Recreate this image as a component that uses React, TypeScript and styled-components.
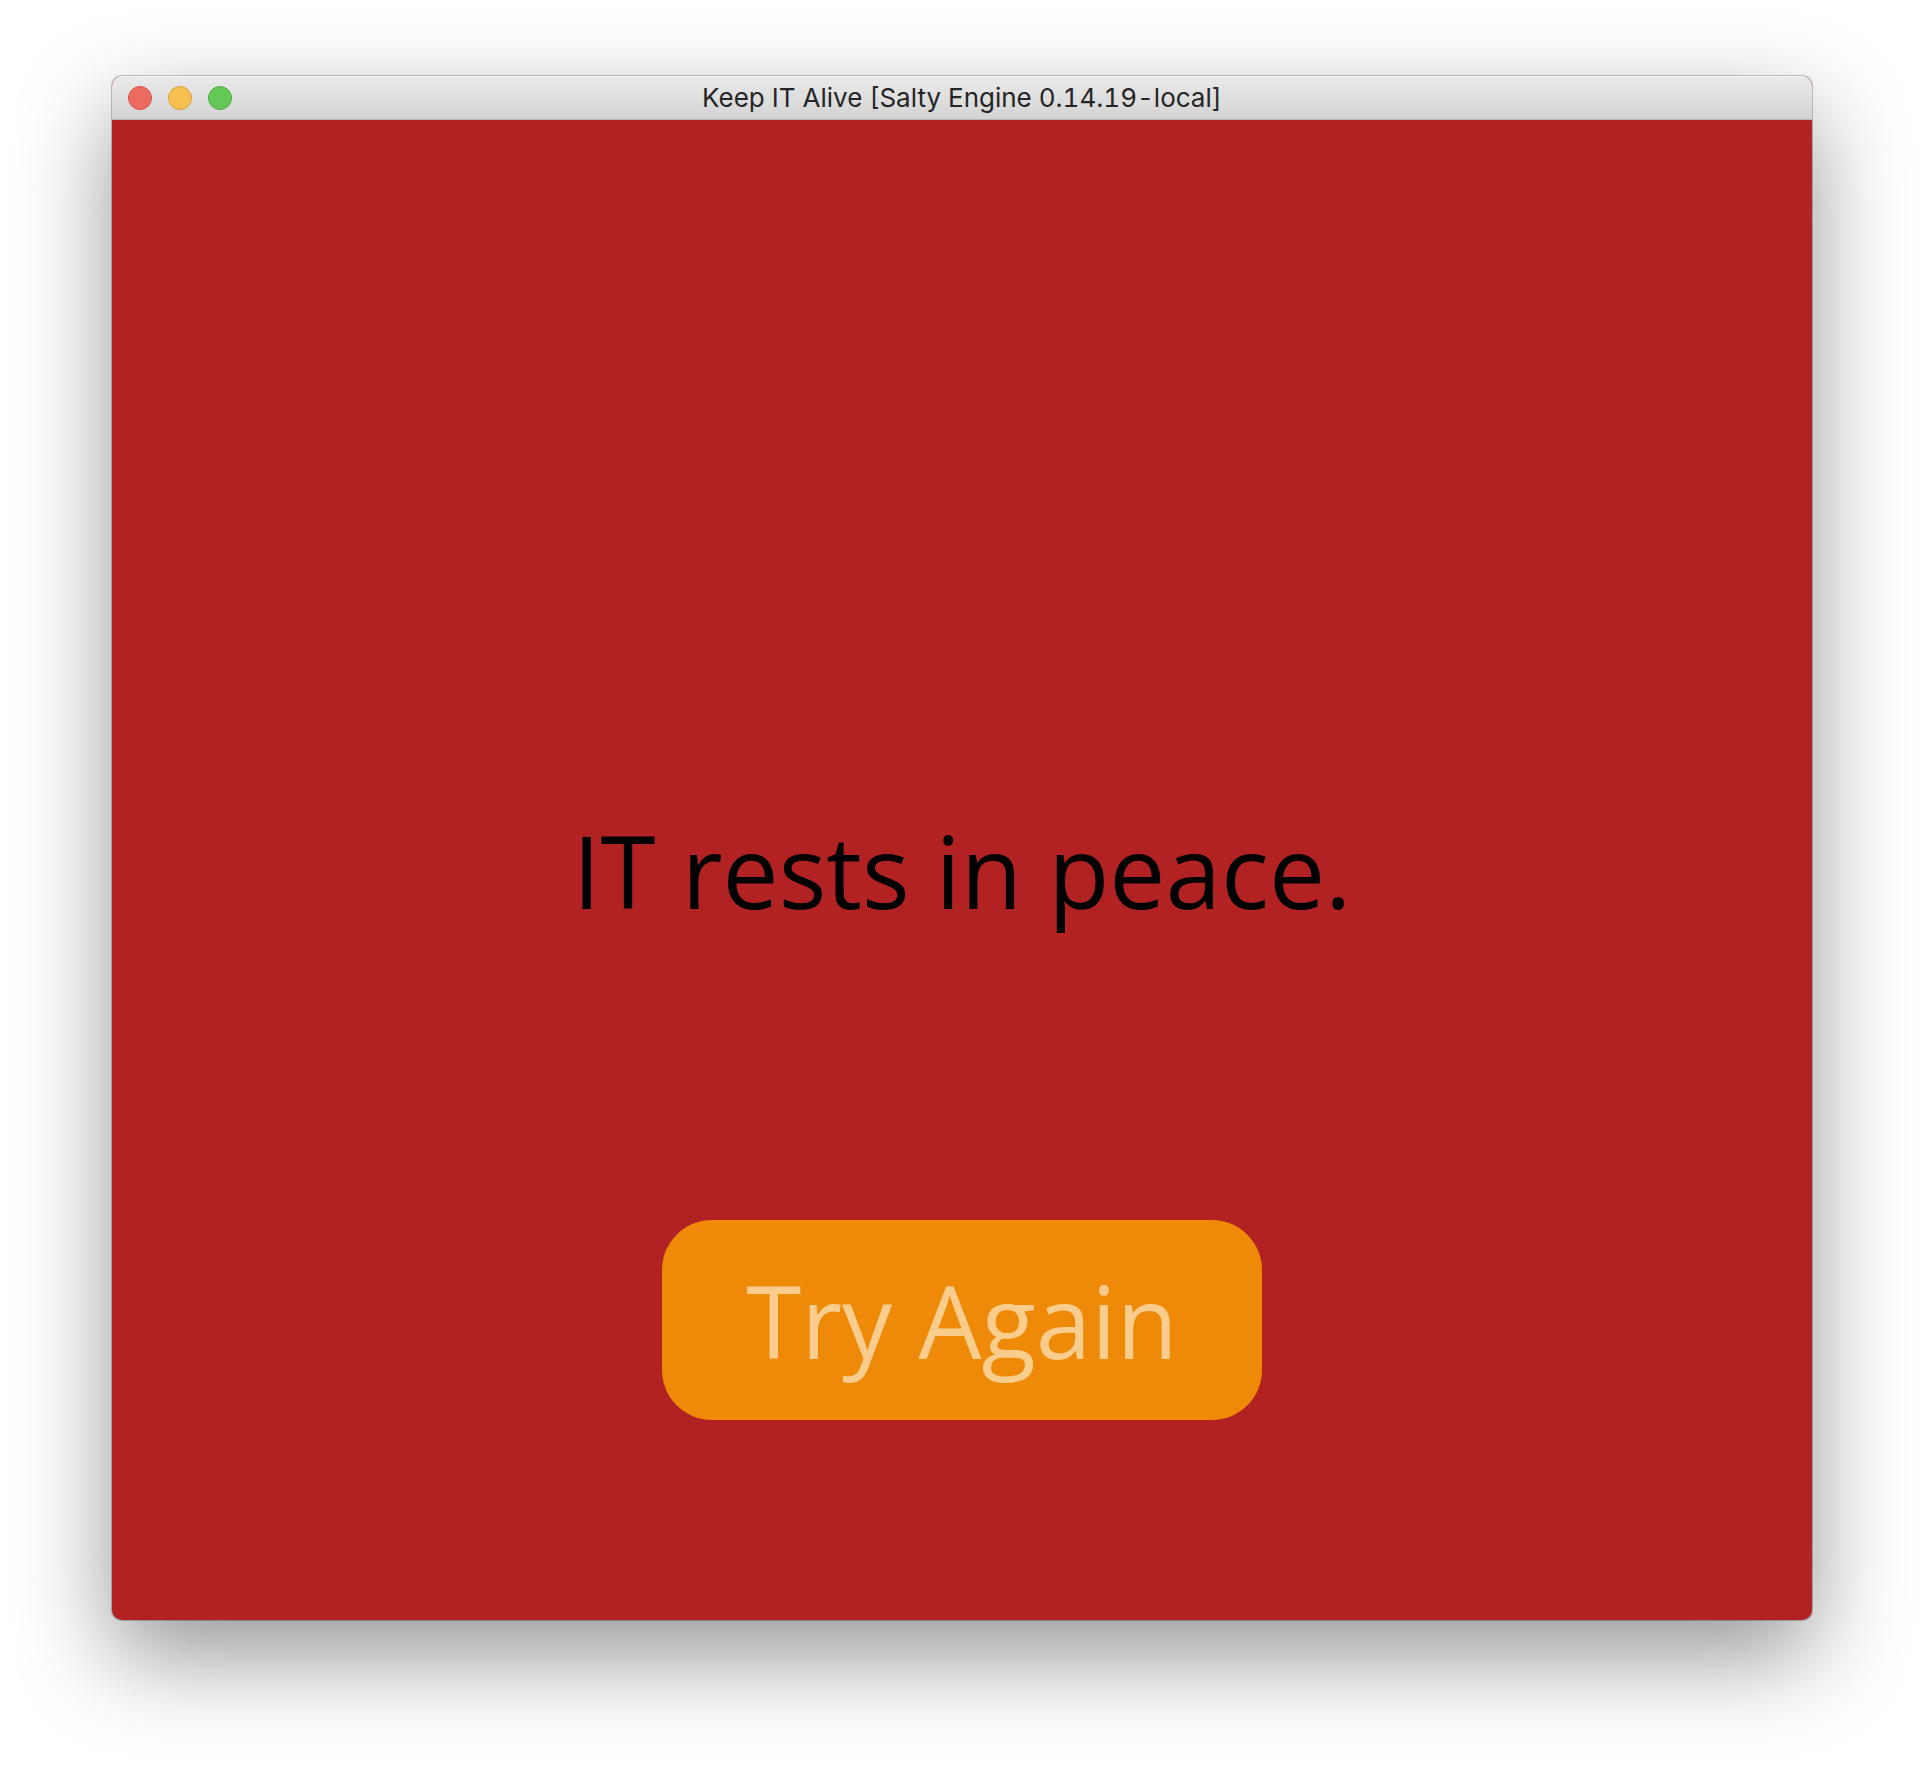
import React from 'react';
import styled, { createGlobalStyle } from 'styled-components';

const GlobalStyle = createGlobalStyle`
  * {
    box-sizing: border-box;
  }
  body {
    margin: 0;
    background: #ffffff;
  }
`;

const Desktop = styled.div`
  display: flex;
  min-height: 100vh;
  padding: 76px 112px 148px;
  overflow: hidden;
`;

const Window = styled.main`
  flex: 1;
  display: flex;
  flex-direction: column;
  border-radius: 10px;
  overflow: hidden;
  background: #b22222;
  box-shadow:
    0 0 0 1px rgba(0, 0, 0, 0.22),
    0 36px 96px rgba(0, 0, 0, 0.42);
`;

const TitleBar = styled.header`
  display: grid;
  grid-template-columns: 1fr auto 1fr;
  align-items: center;
  height: 44px;
  padding: 0 16px;
  background: linear-gradient(#eaeaea, #d3d3d3);
  box-shadow: inset 0 1px 0 #f6f6f6, inset 0 -1px 0 #b4b4b4;
`;

const Controls = styled.div`
  display: flex;
  gap: 16px;
`;

const Control = styled.button<{ $fill: string; $edge: string }>`
  width: 24px;
  height: 24px;
  padding: 0;
  border: 1px solid ${(p) => p.$edge};
  border-radius: 50%;
  background: ${(p) => p.$fill};
`;

const Title = styled.h1`
  margin: 0;
  color: #262626;
  font: 400 26px/32px Inter, 'Liberation Sans', sans-serif;
  font-variant-numeric: tabular-nums;
`;

const Scene = styled.section`
  flex: 1;
  display: grid;
  grid-template-rows: 1fr auto 1fr;
  justify-items: center;
  padding: 0 24px;
  font: 400 100px/136px 'Open Sans', 'Noto Sans', sans-serif;
`;

const Message = styled.p`
  grid-row: 2;
  margin: 0;
  color: #000000;
  text-align: center;
`;

const RetryButton = styled.button`
  grid-row: 3;
  align-self: end;
  width: 100%;
  max-width: 600px;
  height: 200px;
  margin-bottom: 200px;
  padding: 0;
  border: 0;
  border-radius: 50px;
  background: #ee8a08;
  color: #fbcd8c;
  font: inherit;
`;

const controls = [
  { label: 'Close', fill: '#ec6b60', edge: '#d9534c' },
  { label: 'Minimize', fill: '#f5c04f', edge: '#d9a03c' },
  { label: 'Zoom', fill: '#64c856', edge: '#4fae40' },
];

export default function App() {
  return (
    <>
      <GlobalStyle />
      <Desktop>
        <Window>
          <TitleBar>
            <Controls>
              {controls.map((c) => (
                <Control key={c.label} type="button" aria-label={c.label} $fill={c.fill} $edge={c.edge} />
              ))}
            </Controls>
            <Title>Keep IT Alive [Salty Engine 0.14.19-local]</Title>
          </TitleBar>
          <Scene>
            <Message>IT rests in peace.</Message>
            <RetryButton type="button">Try Again</RetryButton>
          </Scene>
        </Window>
      </Desktop>
    </>
  );
}
